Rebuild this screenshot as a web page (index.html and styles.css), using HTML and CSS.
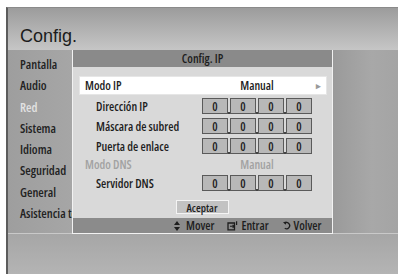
FILE: index.html
```html
<!DOCTYPE html>
<html lang="es">
<head>
<meta charset="utf-8">
<title>Config. IP</title>
<link rel="stylesheet" href="styles.css">
</head>
<body>
<div class="screen">
  <header class="top"><h1 class="title">Config.</h1></header>
  <div class="main">
    <nav class="menu">
      <div class="mi">Pantalla</div>
      <div class="mi">Audio</div>
      <div class="mi active">Red</div>
      <div class="mi">Sistema</div>
      <div class="mi">Idioma</div>
      <div class="mi">Seguridad</div>
      <div class="mi">General</div>
      <div class="mi">Asistencia técnica</div>
    </nav>
    <section class="dialog">
      <div class="dtitle">Config. IP</div>
      <div class="dbody">
        <div class="row sel"><span class="lbl0">Modo IP</span><span class="val">Manual</span><span class="arr">&#9656;</span></div>
        <div class="row"><span class="lbl">Dirección IP</span><div class="ip"><span class="b">0</span><span class="b">0</span><span class="b">0</span><span class="b">0</span></div></div>
        <div class="row"><span class="lbl">Máscara de subred</span><div class="ip"><span class="b">0</span><span class="b">0</span><span class="b">0</span><span class="b">0</span></div></div>
        <div class="row"><span class="lbl">Puerta de enlace</span><div class="ip"><span class="b">0</span><span class="b">0</span><span class="b">0</span><span class="b">0</span></div></div>
        <div class="row dis"><span class="lbl0">Modo DNS</span><span class="val">Manual</span></div>
        <div class="row"><span class="lbl">Servidor DNS</span><div class="ip"><span class="b">0</span><span class="b">0</span><span class="b">0</span><span class="b">0</span></div></div>
        <div class="btnrow"><span class="btn">Aceptar</span></div>
      </div>
      <div class="dfoot">
        <span class="fi fm"><svg width="6" height="10" viewBox="0 0 6 10"><path d="M3 0L6 4H0z M3 10L0 6h6z" fill="#1e1e1e"/></svg>Mover</span>
        <span class="fi fe"><svg width="11" height="10" viewBox="0 0 11 10"><path d="M1 2h6.5v6.8h-6.5z" fill="none" stroke="#1e1e1e" stroke-width="1.3"/><path d="M3 5.3h4M5.6 3.8l1.7 1.5-1.7 1.5" fill="none" stroke="#1e1e1e" stroke-width="1.1"/><path d="M9.6 0.3v3.6" stroke="#1e1e1e" stroke-width="1.2"/></svg>Entrar</span>
        <span class="fi fv"><svg width="8" height="9" viewBox="0 0 8 9"><path d="M1.6 2.2A3.1 3.1 0 1 1 1.8 7.2" fill="none" stroke="#1e1e1e" stroke-width="1.3"/><path d="M0 1.2L3.4 0.4L2.9 3.8z" fill="#1e1e1e"/></svg>Volver</span>
      </div>
    </section>
    <div class="side"></div>
  </div>
  <div class="bottom"></div>
</div>
</body>
</html>
```
FILE: styles.css
```css
html, body { margin: 0; padding: 0; }
body {
  background: #ffffff;
  width: 398px;
  height: 274px;
  overflow: hidden;
  font-family: "Open Sans", sans-serif;
  font-stretch: 75%;
  font-weight: 600;
  color: #1e1e1e;
}
.screen {
  margin: 7px 0 0 6px;
  width: 392px;
  height: 267px;
  border-left: 2px solid #5c5c5c;
  border-top: 1px solid #8a8a8a;
  box-sizing: border-box;
  display: flex;
  flex-direction: column;
  background: #aaaaaa;
}
.top {
  height: 42px;
  flex: none;
  background: linear-gradient(#9c9c9c, #c6c6c6);
  display: flex;
  align-items: flex-end;
}
.title {
  margin: 0 0 4px 12px;
  font-family: "Liberation Sans", sans-serif;
  font-stretch: normal;
  font-weight: normal;
  font-size: 18px;
  line-height: 20px;
  color: #1c1c1c;
}
.main {
  height: 183px;
  flex: none;
  display: flex;
  border-bottom: 1px solid #c9c9c9;
}
.menu {
  width: 64px;
  flex: none;
  background: linear-gradient(90deg, #9e9e9e, #a6a6a6);
  padding-top: 6px;
  overflow: hidden;
  white-space: nowrap;
}
.mi {
  height: 21.3px;
  line-height: 17px;
  padding-left: 12px;
  font-size: 12.5px;
  color: #222;
}
.mi.active { color: #e2e2e2; }
.dialog {
  width: 261px;
  flex: none;
  box-sizing: border-box;
  border: 1px solid #f2f2f2;
  border-top: none;
  background: #d9d9d9;
  display: flex;
  flex-direction: column;
  position: relative;
  z-index: 1;
  height: 184px;
}
.dtitle {
  height: 17px;
  background: #8a8a8a;
  text-align: center;
  font-size: 12px;
  line-height: 18px;
  color: #1e1e1e;
}
.dbody {
  flex: 1;
  padding: 10px 6px 0 7px;
}
.row {
  height: 20px;
  display: flex;
  align-items: center;
  font-size: 12px;
}
.row.sel {
  height: 17px;
  margin-bottom: 2px;
  background: #ffffff;
  box-shadow: 0 0 0 1px #e6e6e6;
}
.lbl0 { width: 130px; padding-left: 5px; flex: none; }
.lbl { width: 106px; padding-left: 16px; flex: none; }
.val { width: 84px; text-align: center; flex: none; }
.arr { margin-left: auto; margin-right: 5px; color: #9a9a9a; font-size: 9px; }
.row.dis { color: #a2a2a2; height: 17px; }
.ip { display: flex; gap: 2px; }
.b {
  width: 26px;
  height: 16px;
  box-sizing: border-box;
  border: 1px solid #5a5a5a;
  background: #b8b8b8;
  text-align: center;
  line-height: 15px;
  font-size: 12px;
  position: relative;
}
.b + .b::before {
  content: "";
  position: absolute;
  left: -3px;
  bottom: -1px;
  width: 2px;
  height: 2px;
  background: #444;
}
.btnrow {
  display: flex;
  justify-content: center;
  padding-top: 7px;
  padding-right: 2px;
}
.btn {
  width: 53px;
  height: 14px;
  box-sizing: border-box;
  border: 1px solid #f4f4f4;
  background: #c2c2c2;
  text-align: center;
  font-size: 11px;
  line-height: 13px;
}
.dfoot {
  height: 15px;
  background: #8b8b8b;
  display: flex;
  align-items: center;
  padding-left: 101px;
  font-size: 12px;
}
.fi { display: flex; align-items: center; }
.fm svg { margin-right: 6px; }
.fe { margin-left: 13px; }
.fe svg { margin-right: 3px; }
.fv { margin-left: 14px; }
.fv svg { margin-right: 3px; }
.side {
  flex: 1;
  background: linear-gradient(90deg, #9a9a9a, #a8a8a8 60%, #a4a4a4);
}
.bottom {
  flex: 1;
  background: linear-gradient(#a6a6a6, #b4b4b4);
}
```
